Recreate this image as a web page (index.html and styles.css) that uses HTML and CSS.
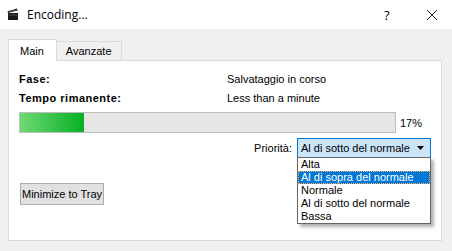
FILE: index.html
```html
<!DOCTYPE html>
<html lang="it">
<head>
    <meta charset="UTF-8" />
    <title>Encoding...</title>
    <link rel="stylesheet" href="styles.css">
</head>
<body>
    <div class="titlebar">
        <svg class="app-icon" width="12" height="13" viewBox="0 0 12 13">
            <path d="M1 5 L11 5 L11 12 L1 12 Z" fill="#1a1a1a"/>
            <path d="M0.5 3.2 L10 0.5 L10.6 2.4 L1.1 5.1 Z" fill="#2a2a2a"/>
            <path d="M3 2.5 L4.5 4.2 M6 1.7 L7.5 3.4" stroke="#bbb" stroke-width="0.8"/>
            <rect x="2" y="6.5" width="8" height="1" fill="#555"/>
        </svg>
        <span class="title">Encoding...</span>
        <span class="help">?</span>
        <span class="close">
            <svg width="12" height="12" viewBox="0 0 12 12"><path d="M1 1 L11 11 M11 1 L1 11" stroke="#222" stroke-width="1"/></svg>
        </span>
    </div>

    <div class="content">
        <div class="tabs">
            <div class="tab active">Main</div>
            <div class="tab">Avanzate</div>
        </div>
        <div class="panel">
            <div class="info">
                <span class="label">Fase:</span>
                <span>Salvataggio in corso</span>
                <span class="label">Tempo rimanente:</span>
                <span>Less than a minute</span>
            </div>

            <div class="progress-row">
                <div class="progress">
                    <div class="fill" style="width: 17%"></div>
                </div>
                <span class="percent">17%</span>
            </div>

            <div class="priority-row">
                <span>Priorità:</span>
                <div class="combo">
                    <div class="combo-box">
                        <span>Al di sotto del normale</span>
                        <svg width="7" height="4" viewBox="0 0 7 4"><path d="M0 0 L7 0 L3.5 4 Z" fill="#000"/></svg>
                    </div>
                    <ul class="combo-list">
                        <li>Alta</li>
                        <li class="selected">Al di sopra del normale</li>
                        <li>Normale</li>
                        <li>Al di sotto del normale</li>
                        <li>Bassa</li>
                    </ul>
                </div>
            </div>

            <button class="tray-btn">Minimize to Tray</button>
        </div>
    </div>
</body>
</html>
```

FILE: styles.css
```css
body {
    margin: 0;
    background: #f0f0f0;
    font-family: "Liberation Sans", Arial, sans-serif;
    font-size: 11px;
    color: #000;
    width: 452px;
    height: 251px;
    overflow: hidden;
}
.titlebar {
    height: 29px;
    background: #fff;
    display: flex;
    align-items: center;
    padding-left: 7px;
}
.app-icon {
    margin-right: 8px;
    margin-top: -1px;
}
.title {
    font-family: "Open Sans", sans-serif;
    font-size: 12px;
    flex: 1;
}
.help {
    font-family: "Open Sans", sans-serif;
    font-size: 13px;
    width: 16px;
    margin-right: 26px;
}
.close {
    width: 26px;
    display: flex;
}
.content {
    padding: 11px 10px 0 8px;
}
.tabs {
    display: flex;
    align-items: flex-end;
    height: 20px;
    position: relative;
    z-index: 1;
}
.tab {
    border: 1px solid #d9d9d9;
    border-bottom: none;
    background: #f0f0f0;
    height: 18px;
    padding: 0 9px;
    display: flex;
    align-items: center;
    margin-left: -1px;
}
.tab.active {
    background: #fff;
    height: 21px;
    margin-bottom: -1px;
    margin-left: 0;
    padding: 0 12px 0 11px;
}
.panel {
    background: #fff;
    border: 1px solid #d9d9d9;
    height: 181px;
    padding: 11px 10px 0 10px;
    box-sizing: border-box;
}
.info {
    display: grid;
    grid-template-columns: 208px auto;
    row-gap: 6px;
    line-height: 13px;
    padding-top: 1px;
}
.label {
    font-weight: bold;
    letter-spacing: 0.5px;
}
.progress-row {
    display: flex;
    align-items: center;
    margin-top: 7px;
}
.progress {
    width: 375px;
    height: 19px;
    border: 1px solid #bcbcbc;
    background: #e6e6e6;
}
.fill {
    height: 100%;
    background: linear-gradient(to right, #6fd975, #06b025);
}
.percent {
    margin-left: 4px;
}
.priority-row {
    display: flex;
    justify-content: flex-end;
    align-items: center;
    gap: 5px;
    margin-top: 5px;
}
.combo {
    position: relative;
    width: 134px;
}
.combo-box {
    height: 18px;
    border: 1px solid #0078d7;
    background: #cce4f7;
    display: flex;
    align-items: center;
    justify-content: space-between;
    padding: 0 6px 0 3px;
    white-space: nowrap;
}
.combo-list {
    position: absolute;
    left: 0;
    top: 19px;
    width: 132px;
    margin: 0;
    padding: 0;
    list-style: none;
    background: #fff;
    border: 1px solid #646464;
    box-shadow: 3px 3px 3px rgba(0, 0, 0, 0.3);
    white-space: nowrap;
}
.combo-list li {
    height: 13px;
    line-height: 13px;
    padding-left: 3px;
}
.combo-list li.selected {
    background: #0078d7;
    color: #fff;
    outline: 1px dotted #ffb060;
    outline-offset: -1px;
}
.tray-btn {
    margin-top: 25px;
    margin-left: 1px;
    font-family: inherit;
    font-size: 11px;
    background: #e1e1e1;
    border: 1px solid #adadad;
    border-radius: 0;
    height: 22px;
    padding: 0 1px;
}
```
